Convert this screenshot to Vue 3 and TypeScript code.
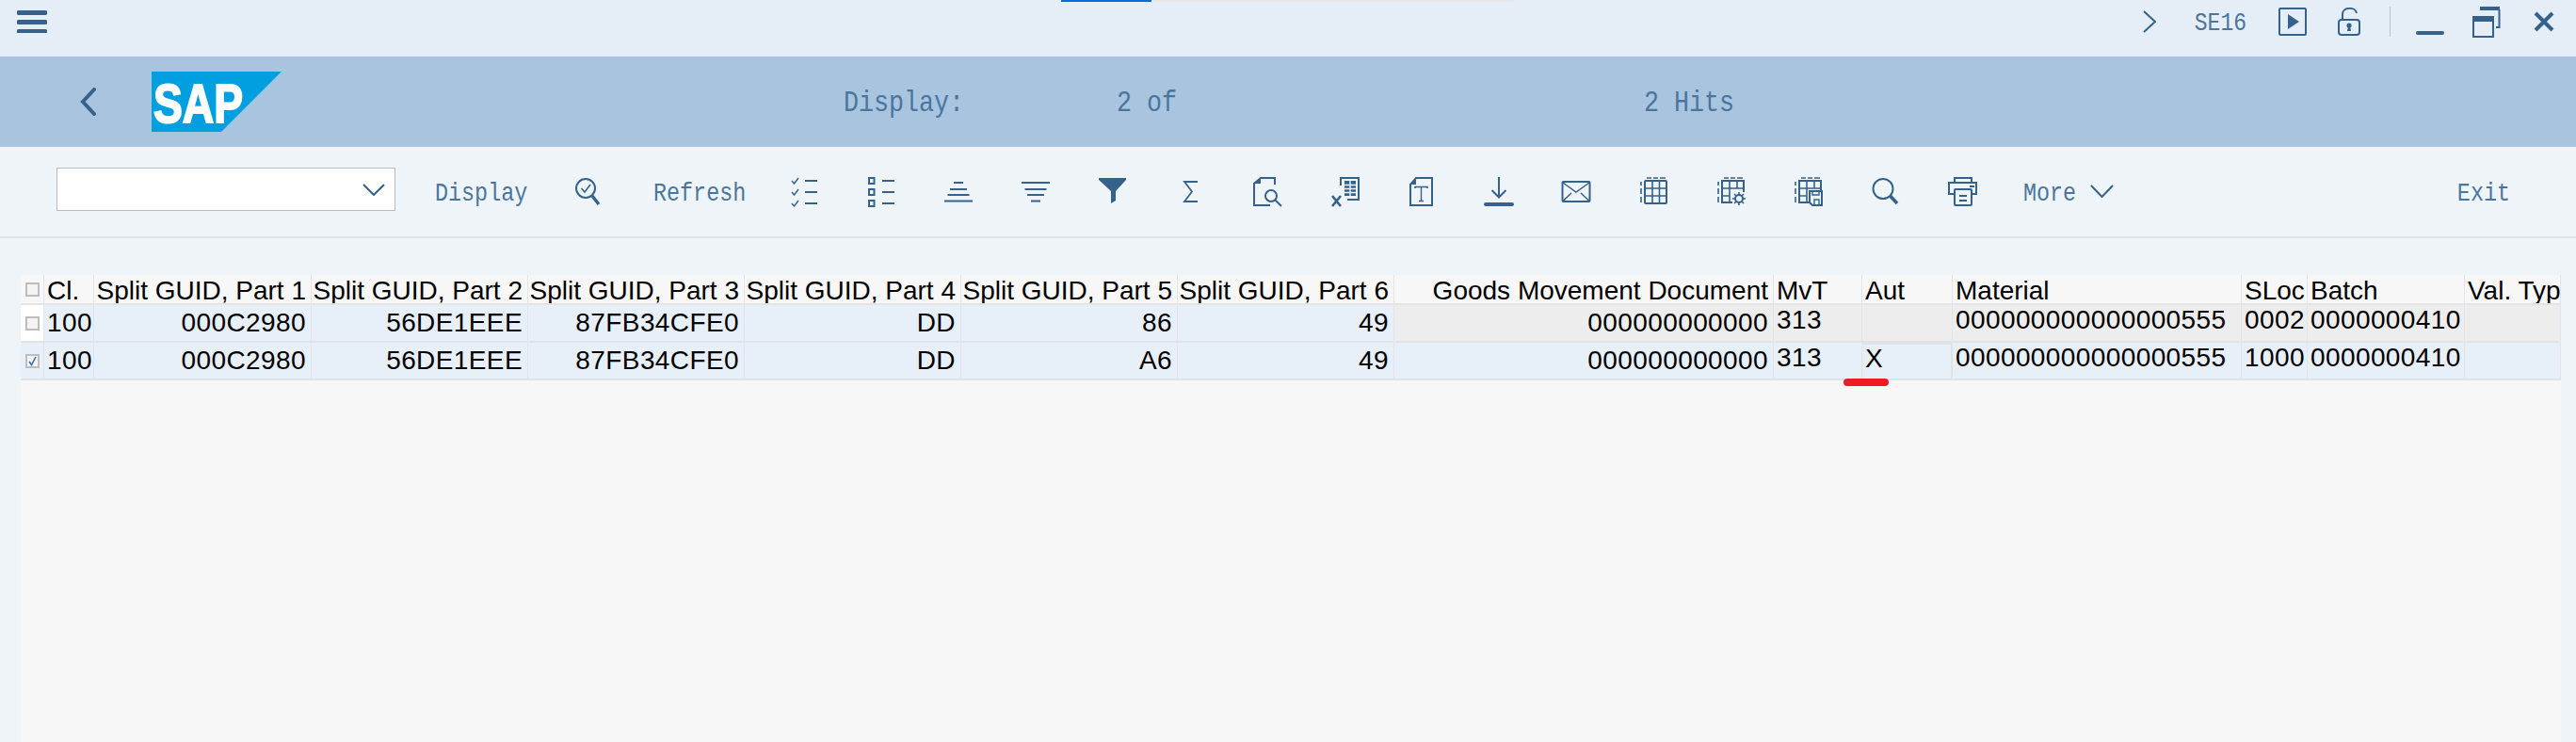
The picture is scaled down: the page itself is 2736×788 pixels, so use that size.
<template>
  <div class="page">
    <header class="topbar">
      <div class="loader"><span class="loader-done"></span></div>
      <svg class="burger" width="32" height="24" viewBox="0 0 32 24">
        <path d="M2 2.5H30M2 12.5H30M2 22.5H30" />
      </svg>
      <div class="top-right">
        <svg width="14" height="24" viewBox="0 0 14 24" class="ico"><path d="M1 1 L13 12 L1 23" /></svg>
        <span class="mono tcode">SE16</span>
        <svg width="30" height="30" viewBox="0 0 30 30" class="ico"><rect x="1" y="1" width="28" height="28" rx="1" /><path class="solid" d="M10 7 L22 15 L10 23 Z" /></svg>
        <svg width="24" height="30" viewBox="0 0 24 30" class="ico lock">
          <path d="M5 12 V7 C5 -1 19 -1 20 6" />
          <rect x="1" y="13" width="22" height="16" rx="3" />
          <circle class="solid" cx="12" cy="19" r="2.6" />
          <path class="solid" d="M11 20 H13 L14 25 H10 Z" />
        </svg>
        <span class="divider"></span>
        <span class="minimize"></span>
        <svg width="30" height="33" viewBox="0 0 30 33" class="ico restore">
          <path class="solid" d="M8 0 H29 V4 H8 Z" />
          <path d="M28.5 3 V22 H25" />
          <rect x="1" y="11" width="21" height="21" />
          <path class="solid" d="M0 10 H23 V16 H0 Z" />
        </svg>
        <svg width="22" height="22" viewBox="0 0 22 22" class="ico close"><path d="M2 2 L20 20 M20 2 L2 20" /></svg>
      </div>
    </header>

    <section class="titlebar">
      <svg class="back ico" width="18" height="30" viewBox="0 0 18 30"><path d="M15 2 L3 15 L15 28" /></svg>
      <svg class="logo" width="138" height="64" viewBox="0 0 138 64">
        <polygon points="0,0 138,0 74,64 0,64" fill="#009fe0" />
        <text x="2" y="54" textLength="95" lengthAdjust="spacingAndGlyphs">SAP</text>
      </svg>
      <div class="title-text">
        <span class="mono t-display">Display:</span>
        <span class="mono t-of">2 of</span>
        <span class="mono">2 Hits</span>
      </div>
    </section>

    <nav class="toolbar">
      <div class="combo">
        <svg class="ico" width="24" height="13" viewBox="0 0 24 13"><path d="M1 1 L12 12 L23 1" /></svg>
      </div>
      <span class="mono btn btn-display">Display</span>
      <span class="tool">
        <svg class="ico" width="32" height="32" viewBox="0 0 32 32">
          <circle cx="15" cy="12" r="10" />
          <path d="M10.5 12 L14 16 L20 8" stroke-width="1.6" />
          <path d="M22 20 L29 29" stroke-width="3.4" />
        </svg>
      </span>
      <span class="mono btn btn-refresh">Refresh</span>
      <span class="tool">
        <svg class="ico" width="32" height="32" viewBox="0 0 32 32">
          <path d="M3 4 L5.5 7 L10 1 M3 16 L5.5 19 L10 13 M3 28 L5.5 31 L10 25" stroke-width="1.4" />
          <path d="M17 4H30M17 16H30M17 28H30" />
        </svg>
      </span>
      <span class="tool">
        <svg class="ico" width="32" height="32" viewBox="0 0 32 32">
          <rect x="3" y="1" width="5.5" height="6" />
          <rect x="3" y="13" width="5.5" height="6" />
          <rect x="3" y="25" width="5.5" height="6" />
          <path d="M17 4H30M17 16H30M17 28H30" />
        </svg>
      </span>
      <span class="tool">
        <svg class="ico" width="32" height="32" viewBox="0 0 32 32">
          <path d="M11 6H21M7 13H25M4.5 19H27.5M1 25.5H31" />
        </svg>
      </span>
      <span class="tool">
        <svg class="ico" width="32" height="32" viewBox="0 0 32 32">
          <path d="M1 6H31M4.5 13H27.5M7 19H25M11 25.5H21" />
        </svg>
      </span>
      <span class="tool">
        <svg class="ico" width="32" height="32" viewBox="0 0 32 32">
          <path class="solid" d="M1 1 H30 V3 L19 15 V25 L14 28 V15 L1 3 Z" />
        </svg>
      </span>
      <span class="tool">
        <svg class="ico" width="32" height="32" viewBox="0 0 32 32">
          <path d="M24 5 H10 L18 15.5 L10 26 H24" stroke-width="1.8" />
        </svg>
      </span>
      <span class="tool">
        <svg class="ico" width="32" height="32" viewBox="0 0 32 32">
          <path d="M24 8 V1 H9 L2 7 V30 H19" />
          <path class="solid" d="M2 7 L9 1 V7 Z" />
          <circle cx="20" cy="20" r="6" />
          <path d="M24.5 24.5 L31 31" />
        </svg>
      </span>
      <span class="tool">
        <svg class="ico" width="32" height="32" viewBox="0 0 32 32">
          <path d="M12 9 V1 H31 V24 H19" />
          <rect class="solid" x="16" y="4" width="12" height="16" />
          <path class="cut" d="M16 8.5H28M16 12.5H28M16 16.5H28M22 4V20" />
          <path d="M3 20 L12 31 M12 20 L3 31" stroke-width="2.6" />
        </svg>
      </span>
      <span class="tool">
        <svg class="ico" width="32" height="32" viewBox="0 0 32 32">
          <path d="M4 8 L10 1 H27 V30 H4 Z" />
          <path class="solid" d="M4 8 L10 1 V8 Z" />
          <path d="M9 12 V10.5 H22 V12" stroke-width="1.6" />
          <path d="M15.5 10 V25 M13 25.5 H18" stroke-width="1.4" />
        </svg>
      </span>
      <span class="tool">
        <svg class="ico" width="32" height="32" viewBox="0 0 32 32">
          <path d="M16 0 V21 M8.5 14 L16 21.5 L23.5 14" />
          <path d="M2 29 H30" stroke-width="4" stroke-linecap="round" />
        </svg>
      </span>
      <span class="tool">
        <svg class="ico" width="32" height="32" viewBox="0 0 32 32">
          <rect x="1.5" y="5" width="29" height="21" rx="1" />
          <path d="M2 6 L16 16 L30 6 M2 25.5 L11 17 M30 25.5 L21 17" stroke-width="1.5" />
        </svg>
      </span>
      <span class="tool">
        <svg class="ico" width="32" height="32" viewBox="0 0 32 32">
          <path d="M9 1H14M16 1H21M23 1H29M3 5V9M3 12V18M3 21V27" stroke-width="1.6" />
          <rect x="7" y="4" width="23" height="24" rx="1" />
          <path d="M15 4V28M22.5 4V28M7 12H30M7 20H30" stroke-width="1.6" />
        </svg>
      </span>
      <span class="tool">
        <svg class="ico" width="32" height="32" viewBox="0 0 32 32">
          <path d="M9 1H14M16 1H21M23 1H29M3 5V9M3 12V18M3 21V27" stroke-width="1.6" />
          <path d="M18 27 H7 V4 H30 V16" />
          <path d="M15 4V27M23 4V12M7 12H30M7 20H15" stroke-width="1.6" />
          <circle cx="25" cy="23" r="4" />
          <path d="M25 16V19M25 27V30M18 23H21M29 23H32M20 18L22 20M30 18L28 20M20 28L22 26M30 28L28 26" stroke-width="1.6" />
        </svg>
      </span>
      <span class="tool">
        <svg class="ico" width="32" height="32" viewBox="0 0 32 32">
          <path d="M9 1H14M16 1H21M23 1H29M3 5V9M3 12V18M3 21V27" stroke-width="1.6" />
          <path d="M17 27 H7 V4 H30 V14" />
          <path d="M15 4V27M23 4V12M7 12H30M7 20H15" stroke-width="1.6" />
          <path d="M18 15 H31 V30 H21 L18 27 Z" />
          <path d="M21 15 V19 H28 V15 M23 30 V24 H28 V30" stroke-width="1.4" />
        </svg>
      </span>
      <span class="tool">
        <svg class="ico" width="32" height="32" viewBox="0 0 32 32">
          <circle cx="14" cy="12.5" r="10.5" />
          <path d="M21.5 20 L29 28" stroke-width="3.6" />
        </svg>
      </span>
      <span class="tool">
        <svg class="ico" width="32" height="32" viewBox="0 0 32 32">
          <path d="M8 5 V1 H26 V5" />
          <path d="M8 18 H2 V6 H31 V18 H26" />
          <rect x="8" y="13" width="18" height="17" rx="1" />
          <path d="M13 20H21M13 25H21M24 10H29" stroke-width="1.8" />
        </svg>
      </span>
      <span class="mono btn btn-more">More</span>
      <svg class="ico more-chev" width="25" height="14" viewBox="0 0 25 14"><path d="M1 1 L12.5 13 L24 1" /></svg>
      <span class="mono btn btn-exit">Exit</span>
    </nav>

    <main class="content">
      <div class="table">
        <div class="row head">
          <div class="cell sel"><span class="check"></span></div>
          <div v-for="c in columns" :key="c.title" class="cell" :class="{ right: c.right }">{{ c.title }}</div>
        </div>
        <div v-for="(row, i) in rows" :key="i" class="row" :class="{ picked: row.picked }">
          <div class="cell sel">
            <span class="check">
              <svg v-if="row.picked" width="11" height="11" viewBox="0 0 11 11"><path d="M2 6 L4.5 9.5 L9 1" /></svg>
            </span>
          </div>
          <div
            v-for="(val, j) in row.cells"
            :key="j"
            class="cell num"
            :class="{ right: columns[j].right, rest: j >= 7, lift: j >= 8, focus: row.picked && j === 9 }"
          >{{ val }}</div>
        </div>
        <span class="redline"></span>
      </div>
    </main>
  </div>
</template>

<script setup lang="ts">
interface Column {
  title: string
  right?: boolean
}

const columns: Column[] = [
  { title: 'Cl.' },
  { title: 'Split GUID, Part 1', right: true },
  { title: 'Split GUID, Part 2', right: true },
  { title: 'Split GUID, Part 3', right: true },
  { title: 'Split GUID, Part 4', right: true },
  { title: 'Split GUID, Part 5', right: true },
  { title: 'Split GUID, Part 6', right: true },
  { title: 'Goods Movement Document', right: true },
  { title: 'MvT' },
  { title: 'Aut' },
  { title: 'Material' },
  { title: 'SLoc' },
  { title: 'Batch' },
  { title: 'Val. Type' },
]

const rows = [
  {
    picked: false,
    cells: ['100', '000C2980', '56DE1EEE', '87FB34CFE0', 'DD', '86', '49', '000000000000', '313', '', '000000000000000555', '0002', '0000000410', ''],
  },
  {
    picked: true,
    cells: ['100', '000C2980', '56DE1EEE', '87FB34CFE0', 'DD', 'A6', '49', '000000000000', '313', 'X', '000000000000000555', '1000', '0000000410', ''],
  },
]
</script>

<style>
html,
body {
  margin: 0;
  background: #eff4f9;
}
</style>

<style scoped>
.page {
  width: 2736px;
  height: 788px;
  display: flex;
  flex-direction: column;
  overflow: hidden;
  background: #eff4f9;
  color: #34628c;
}

/* the original font is a narrow tall monospace, so stretch the mono a bit */
.mono {
  display: inline-block;
  font-family: "Liberation Mono", monospace;
  color: #4a769e;
  transform: scaleY(1.2);
  white-space: pre;
}

.ico {
  flex: none;
  fill: none;
  stroke: #34628c;
  stroke-width: 2;
}

.ico .solid {
  fill: #34628c;
  stroke: none;
}

.ico .cut {
  stroke: #eff4f9;
  stroke-width: 1.4;
}

/* top bar */
.topbar {
  position: relative;
  height: 60px;
  flex: none;
  display: flex;
  align-items: center;
  justify-content: space-between;
  padding: 0 23px 0 18px;
  background: #e5edf7;
}

.loader {
  position: absolute;
  left: 1127px;
  top: 0;
  width: 481px;
  height: 2px;
  background: #e8e8e8;
}

.loader-done {
  display: block;
  width: 96px;
  height: 100%;
  background: #0a6ed1;
}

.burger {
  margin-top: -14px;
  fill: none;
  stroke: #34628c;
  stroke-width: 5;
  stroke-linecap: round;
}

.top-right {
  display: flex;
  align-items: center;
  margin-top: -14px;
}

.tcode {
  margin-left: 41px;
  margin-top: 3px;
  font-size: 23px;
}

.top-right svg:nth-of-type(2) {
  margin-left: 34px;
}

.lock {
  margin-left: 33px;
}

.divider {
  width: 1px;
  height: 32px;
  margin-left: 31px;
  background: #b9c4cf;
}

.minimize {
  width: 30px;
  height: 4px;
  margin: 24px 0 0 27px;
  border-radius: 2px;
  background: #34628c;
}

.restore {
  margin-left: 30px;
}

.close {
  margin-left: 35px;
  stroke-width: 4;
}

/* title bar */
.titlebar {
  height: 96px;
  flex: none;
  display: flex;
  align-items: center;
  background: #a9c4de;
}

.back {
  margin: 0 0 0 85px;
  stroke-width: 4;
  stroke-linecap: round;
}

.logo {
  margin-left: 58px;
}

.logo text {
  font-family: "Liberation Sans", sans-serif;
  font-weight: 700;
  font-size: 58px;
  fill: #fff;
  stroke: #fff;
  stroke-width: 2;
}

.title-text {
  display: flex;
  margin-left: 597px;
  margin-top: 4px;
  font-size: 26.7px;
}

.t-display {
  width: 290px;
}

.t-of {
  width: 560px;
}

/* toolbar */
.toolbar {
  height: 95px;
  flex: none;
  display: flex;
  align-items: center;
  box-sizing: content-box;
  padding-left: 60px;
  border-bottom: 2px solid #dde6ef;
}

.combo {
  box-sizing: border-box;
  width: 360px;
  height: 46px;
  margin-top: -5px;
  display: flex;
  align-items: center;
  justify-content: flex-end;
  padding-right: 10px;
  background: #fff;
  border: 1px solid #bbb;
}

.btn {
  box-sizing: border-box;
  font-size: 23.4px;
  margin-top: 5px;
}

.btn-display {
  width: 142px;
  margin-left: 20px;
  padding-left: 22px;
}

.btn-refresh {
  width: 149px;
  padding-left: 30px;
}

.btn-more {
  margin-left: 24px;
}

.more-chev {
  margin-left: 15px;
  margin-top: -2px;
}

.btn-exit {
  margin-left: auto;
  padding-right: 70px;
}

.tool {
  width: 82px;
  flex: none;
  display: flex;
  justify-content: center;
}

/* table */
.content {
  flex: 1;
  min-height: 0;
  padding: 39px 16px 0 22px;
  display: flex;
}

.table {
  position: relative;
  flex: 1;
  background: #f7f7f7;
  font-family: "Liberation Sans", Arial, sans-serif;
  font-size: 28px;
  color: #000;
}

.row {
  display: grid;
  grid-template-columns: 25px 53px 231px 230px 230px 230px 230px 230px 403px 94px 96px 307px 70px 167px 102px;
  height: 40px;
}

.row.head {
  height: 32px;
}

.cell {
  box-sizing: border-box;
  overflow: hidden;
  white-space: nowrap;
  display: flex;
  align-items: center;
  padding: 0 3px;
  background: #e7eff8;
  border-right: 1px solid #e2e6ea;
  border-bottom: 2px solid #dfe3e7;
}

.head .cell {
  padding-top: 3px;
  background: #f7f7f7;
  border-bottom: 2px solid #e4e4e4;
}

.cell.right {
  justify-content: flex-end;
  padding-right: 5px;
}

.num {
  letter-spacing: 0.4px;
}

.row:not(.picked) .rest {
  background: #ededed;
}

.lift {
  padding-bottom: 6px;
}

.cell.focus {
  padding-left: 1px;
  border: 2px solid #dfe3e7;
  border-left-color: #e7ecf2;
}

.cell.sel {
  padding: 0 0 0 5px;
}

.row:not(.picked):not(.head) .sel {
  background: #fff;
}

.check {
  box-sizing: border-box;
  width: 15px;
  height: 15px;
  display: flex;
  align-items: center;
  justify-content: center;
  background: #f4f4f4;
  border: 2px solid #bdbdbd;
}

.check svg {
  fill: none;
  stroke: #346fb0;
  stroke-width: 1.6;
}

.redline {
  position: absolute;
  left: 1936px;
  top: 110px;
  width: 48px;
  height: 8px;
  border-radius: 4px;
  background: #ec1c24;
}
</style>
